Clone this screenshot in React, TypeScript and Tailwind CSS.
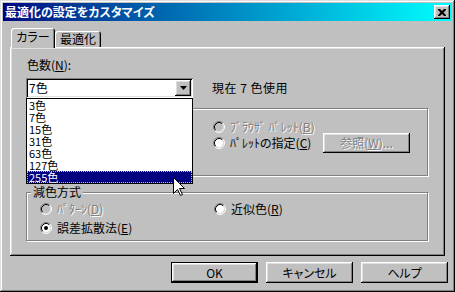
import type { ReactNode } from "react";

const raised =
  "shadow-[inset_-1px_-1px_#000,inset_1px_1px_#fff,inset_-2px_-2px_#808080,inset_2px_2px_#dfdfdf]";
const disabledText = "text-[#808080] [text-shadow:1px_1px_#fff]";

function Radio({ checked = false, disabled = false }: { checked?: boolean; disabled?: boolean }) {
  return (
    <svg width="12" height="12" viewBox="0 0 12 12" className="shrink-0">
      <circle cx="6" cy="6" r="4.2" fill={disabled ? "#c0c0c0" : "#fff"} />
      <path d="M2.11 9.89 A5.5 5.5 0 0 1 9.89 2.11" fill="none" stroke="#808080" />
      <path d="M9.89 2.11 A5.5 5.5 0 0 1 2.11 9.89" fill="none" stroke="#fff" />
      <path d="M2.82 9.18 A4.5 4.5 0 0 1 9.18 2.82" fill="none" stroke="#000" />
      <path d="M9.18 2.82 A4.5 4.5 0 0 1 2.82 9.18" fill="none" stroke="#dfdfdf" />
      {checked ? <circle cx="6" cy="6" r="2" fill="#000" /> : null}
    </svg>
  );
}

function RadioLabel({
  checked,
  disabled,
  children,
}: {
  checked?: boolean;
  disabled?: boolean;
  children: ReactNode;
}) {
  return (
    <div className="flex h-[14px] items-center gap-[5px]">
      <Radio checked={checked} disabled={disabled} />
      <span className={`whitespace-nowrap leading-[14px] ${disabled ? disabledText : ""}`}>
        {children}
      </span>
    </div>
  );
}

function Button({
  children,
  isDefault = false,
}: {
  children: ReactNode;
  isDefault?: boolean;
}) {
  return (
    <div
      className={`flex h-[21px] w-[87px] items-center justify-center ${
        isDefault ? "border border-black" : ""
      }`}
    >
      <div className={`flex h-full w-full items-center justify-center ${raised}`}>
        {children}
      </div>
    </div>
  );
}

const colors = ["3色", "7色", "15色", "31色", "63色", "127色", "255色"];

export default function App() {
  return (
    <div className="relative flex h-[292px] w-[455px] flex-col bg-[#c0c0c0] p-[3px] text-[12px] text-black [font-family:'Noto_Sans_CJK_JP','Noto_Sans',sans-serif] [font-feature-settings:'palt'] shadow-[inset_-1px_-1px_#000,inset_1px_1px_#dfdfdf,inset_-2px_-2px_#808080,inset_2px_2px_#fff]">
      {/* title bar */}
      <div className="flex h-[18px] items-center justify-between bg-gradient-to-r from-[#000080] to-[#00ffff] pl-[2px] pr-[2px]">
        <span className="font-bold leading-[18px] text-white">最適化の設定をカスタマイズ</span>
        <div className={`flex h-[14px] w-[16px] items-center justify-center bg-[#c0c0c0] ${raised}`}>
          <svg width="8" height="7" viewBox="0 0 8 7">
            <path d="M0 0h2l2 2 2-2h2v1l-2.5 2.5L8 6v1H6L4 5 2 7H0V6l2.5-2.5L0 1z" fill="#000" />
          </svg>
        </div>
      </div>

      {/* tabs */}
      <div className="ml-[7px] mt-[7px] flex h-[19px] items-end pl-[1px]">
        <div className="relative z-10 -mb-px flex h-[20px] w-[44px] items-center justify-center rounded-t-[3px] bg-[#c0c0c0] pb-[2px] shadow-[inset_1px_1px_#fff,inset_-1px_0_#000,inset_-2px_0_#808080]">
          カラー
        </div>
        <div className="flex h-[16px] w-[46px] items-center justify-center rounded-t-[3px] shadow-[inset_1px_1px_#fff,inset_-1px_0_#000,inset_-2px_0_#808080]">
          最適化
        </div>
      </div>

      {/* panel */}
      <div className="relative ml-[7px] flex h-[209px] w-[435px] flex-col pl-[16px] shadow-[inset_-1px_-1px_#000,inset_1px_1px_#fff,inset_-2px_-2px_#808080,inset_2px_2px_#dfdfdf]">
        <div className="mt-[11px] h-[14px] pl-px leading-[14px]">
          色数(<span className="underline">N</span>):
        </div>
        <div className="mt-[6px] flex items-center">
          <div className="flex h-[20px] w-[167px] items-center bg-white pl-[3px] pr-[2px] shadow-[inset_1px_1px_#808080,inset_-1px_-1px_#fff,inset_2px_2px_#000,inset_-2px_-2px_#dfdfdf]">
            <span className="flex-1 leading-[14px]">7色</span>
            <div className={`flex h-[16px] w-[16px] items-center justify-center bg-[#c0c0c0] ${raised}`}>
              <svg width="7" height="4" viewBox="0 0 7 4">
                <path d="M0 0h7L3.5 4z" fill="#000" />
              </svg>
            </div>
          </div>
          <span className="ml-[19px] leading-[14px] tracking-[0.5px]">現在 7 色使用</span>
        </div>

        {/* palette group */}
        <div className="mt-[10px] flex h-[68px] w-[402px] flex-col border border-[#808080] pl-[186px] pt-[11px] shadow-[inset_1px_1px_#fff,1px_1px_#fff]">
          <RadioLabel disabled>
            ﾌﾞﾗｳｻﾞ ﾊﾟﾚｯﾄ(<span className="underline">B</span>)
          </RadioLabel>
          <div className="-mt-px flex h-[20px] items-center">
            <div className="w-[110px]">
              <RadioLabel>
                ﾊﾟﾚｯﾄの指定(<span className="underline">C</span>)
              </RadioLabel>
            </div>
            <div className={`flex h-[20px] w-[87px] items-center justify-center ${raised} ${disabledText}`}>
              参照(<span className="underline">W</span>)...
            </div>
          </div>
        </div>

        {/* reduction group */}
        <div className="relative mt-[16px] grid h-[49px] w-[402px] grid-cols-[174px_1fr] content-start gap-y-[5px] border border-[#808080] pl-[13px] pt-[9px] shadow-[inset_1px_1px_#fff,1px_1px_#fff]">
          <span className="absolute left-[4px] top-[-8px] bg-[#c0c0c0] px-[2px] leading-[14px]">
            減色方式
          </span>
          <RadioLabel disabled>
            ﾊﾟﾀｰﾝ(<span className="underline">D</span>)
          </RadioLabel>
          <RadioLabel>
            近似色(<span className="underline">R</span>)
          </RadioLabel>
          <RadioLabel checked>
            誤差拡散法(<span className="underline">E</span>)
          </RadioLabel>
        </div>

        {/* open dropdown list */}
        <div className="absolute left-[16px] top-[51px] z-20 flex w-[167px] flex-col border border-black bg-white text-[11px] leading-[12px]">
          {colors.map((c, i) =>
            i === colors.length - 1 ? (
              <div
                key={c}
                className="flex h-[12px] items-center border border-dotted border-[#c8c880] bg-[#000080] pl-px text-white"
              >
                {c}
              </div>
            ) : (
              <div key={c} className="flex h-[12px] items-center pl-[2px]">
                {c}
              </div>
            ),
          )}
        </div>
      </div>

      {/* buttons */}
      <div className="mt-[6px] flex justify-end gap-[8px] pr-[4px]">
        <Button isDefault>OK</Button>
        <Button>キャンセル</Button>
        <Button>ヘルプ</Button>
      </div>

      {/* mouse pointer */}
      <svg
        width="13"
        height="20"
        viewBox="0 0 13 20"
        className="absolute left-[173px] top-[177px] z-30"
      >
        <path
          d="M0.5 0.5 L0.5 16.5 L4.5 12.5 L7.5 18.5 L9.5 17.5 L6.5 11.5 L11.5 11.5 Z"
          fill="#fff"
          stroke="#000"
        />
      </svg>
    </div>
  );
}
